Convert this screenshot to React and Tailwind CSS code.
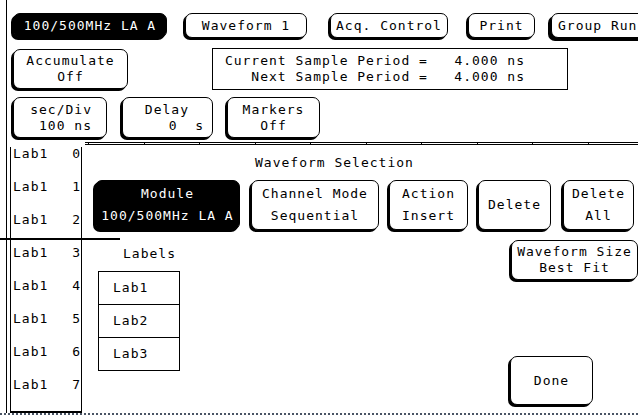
import clsx from 'clsx';

// HP logic analyzer style button: rounded, thin outline, heavy left/bottom edge
const Btn = ({ dark, className, children }) => (
  <div
    className={clsx(
      'flex shrink-0 flex-col justify-center rounded-[7px] border border-black shadow-[-2px_2px_0_0_#000] leading-[16px]',
      dark ? 'bg-black text-white' : 'bg-white text-black',
      className
    )}
  >
    {children}
  </div>
);

const labelRows = [0, 1, 2, 3, 4, 5, 6, 7];
const ticks = [0, 1, 2, 3, 4, 5, 6, 7, 8, 9];

const App = () => {
  return (
    <div className="relative h-[417px] w-[638px] overflow-hidden bg-white font-['DejaVu_Sans_Mono',monospace] text-[13px] tracking-[1px] text-black">
      <div className="ml-[6px] flex h-[413px] flex-col border-l border-black">
        {/* Top row of menus */}
        <div className="mt-[13px] flex h-[25px]">
          <Btn dark className="ml-[6px] w-[154px] items-center">100/500MHz LA A</Btn>
          <Btn className="ml-[18px] w-[122px] items-center">Waveform 1</Btn>
          <Btn className="ml-[23px] w-[118px] items-center">Acq. Control</Btn>
          <Btn className="ml-[20px] w-[67px] items-center">Print</Btn>
          <Btn className="ml-[16px] w-[100px] items-start pl-[6px] shadow-[-3px_3px_0_0_#000]">Group Run</Btn>
        </div>

        {/* Accumulate + sample period */}
        <div className="mt-[11px] flex h-[40px]">
          <Btn className="ml-[6px] w-[115px] items-center">
            <span>Accumulate</span>
            <span>Off</span>
          </Btn>
          <div className="-mt-[1px] ml-[84px] flex h-[42px] w-[356px] flex-col items-end justify-center border border-black pr-[42px] leading-[16px] whitespace-pre">
            <span>Current Sample Period =   4.000 ns</span>
            <span>Next Sample Period =   4.000 ns</span>
          </div>
        </div>

        {/* Timebase row */}
        <div className="mt-[8px] flex h-[41px]">
          <Btn className="ml-[6px] w-[94px] items-end pr-[14px]">
            <span>sec/Div</span>
            <span>100 ns</span>
          </Btn>
          <Btn className="ml-[15px] w-[91px] items-end pr-[8px] whitespace-pre">
            <span className="mr-[15px]">Delay</span>
            <span>0  s</span>
          </Btn>
          <Btn className="ml-[14px] w-[93px] items-center">
            <span>Markers</span>
            <span>Off</span>
          </Btn>
        </div>

        {/* Waveform top ruler */}
        <div className="mt-[4px] ml-[78px] flex h-[3px] gap-[54.5px] border-y border-black pl-[3px]">
          {ticks.map((t) => (
            <span key={t} className="-mt-[1px] h-[3px] w-px shrink-0 bg-black" />
          ))}
        </div>

        {/* Labels column + dialog */}
        <div className="mt-[2px] flex flex-1">
          <div className="ml-[3px] flex w-[74px] flex-col border-x border-b-2 border-black">
            {labelRows.map((n) => (
              <div key={n} className="flex h-[33px] justify-between pl-[2px] pr-[1px] leading-[13px]">
                <span>Lab1</span>
                <span className="tracking-normal">{n}</span>
              </div>
            ))}
          </div>

          <div className="flex flex-1 flex-col">
            <div className="mt-[9px] ml-[173px] leading-[13px]">Waveform Selection</div>

            <div className="mt-[11px] flex h-[50px] leading-[22px]">
              <Btn dark className="ml-[13px] w-[145px] items-center leading-[22px]">
                <span>Module</span>
                <span>100/500MHz LA A</span>
              </Btn>
              <Btn className="ml-[11px] w-[128px] items-center leading-[22px]">
                <span>Channel Mode</span>
                <span>Sequential</span>
              </Btn>
              <Btn className="ml-[10px] w-[79px] items-center leading-[22px]">
                <span>Action</span>
                <span>Insert</span>
              </Btn>
              <Btn className="ml-[10px] w-[73px] items-center">Delete</Btn>
              <Btn className="ml-[12px] w-[71px] items-center leading-[22px]">
                <span>Delete</span>
                <span>All</span>
              </Btn>
            </div>

            <div className="flex">
              <div className="ml-[16px] flex w-[82px] flex-col">
                <div className="mt-[17px] ml-[25px] leading-[13px]">Labels</div>
                <div className="mt-[11px] flex flex-col border border-black">
                  <div className="flex h-[33px] items-center border-b border-black pl-[14px]">Lab1</div>
                  <div className="flex h-[33px] items-center border-b border-black pl-[14px]">Lab2</div>
                  <div className="flex h-[32px] items-center pl-[14px]">Lab3</div>
                </div>
              </div>

              <div className="ml-[331px] flex flex-col">
                <Btn className="mt-[10px] h-[40px] w-[127px] items-center leading-[15px]">
                  <span>Waveform Size</span>
                  <span>Best Fit</span>
                </Btn>
                <Btn className="mt-[76px] -ml-[1px] h-[49px] w-[83px] items-center">Done</Btn>
              </div>
            </div>
          </div>
        </div>
      </div>

      {/* bottom dotted edge */}
      <div className="h-0 border-t-2 border-dotted border-gray-600" />

      {/* cursor line crossing the label column */}
      <div className="absolute top-[238px] left-0 h-[2px] w-[120px] bg-black" />
    </div>
  );
};

export default App;
